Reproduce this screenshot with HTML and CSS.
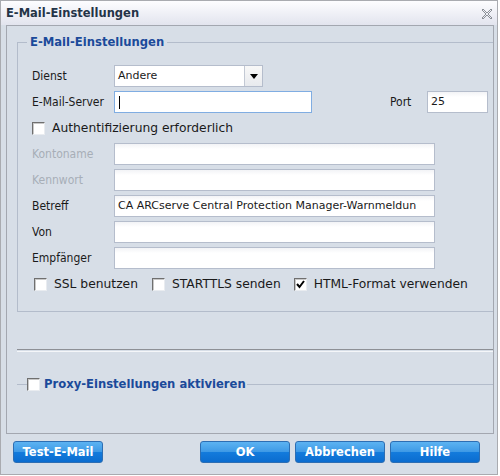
FILE: index.html
```html
<!DOCTYPE html>
<html lang="de">
<head>
    <meta charset="UTF-8">
    <meta name="viewport" content="width=device-width, initial-scale=1.0">
    <title>E-Mail-Einstellungen</title>
    <link rel="stylesheet" href="styles.css">
</head>
<body>
    <div class="dialog">
        <div class="titlebar">
            <span class="title">E-Mail-Einstellungen</span>
            <svg class="close" width="10" height="10" viewBox="0 0 10 10">
                <path d="M1 0 L5 4 L9 0 L10 1 L6 5 L10 9 L9 10 L5 6 L1 10 L0 9 L4 5 L0 1 Z" fill="none" stroke="#8a8f96" stroke-width="1"/>
            </svg>
        </div>

        <div class="panel">
            <fieldset class="group">
                <legend>E-Mail-Einstellungen</legend>
                <div class="form">
                    <div class="row">
                        <label class="lbl">Dienst</label>
                        <div class="select">
                            <span class="select-text">Andere</span>
                            <span class="select-btn"><span class="arrow"></span></span>
                        </div>
                    </div>
                    <div class="row">
                        <label class="lbl">E-Mail-Server</label>
                        <div class="field field-server focused"><span class="caret"></span></div>
                        <label class="lbl-port">Port</label>
                        <div class="field field-port">25</div>
                    </div>
                    <div class="row">
                        <span class="check"></span>
                        <span class="check-text">Authentifizierung erforderlich</span>
                    </div>
                    <div class="row">
                        <label class="lbl disabled">Kontoname</label>
                        <div class="field field-wide"></div>
                    </div>
                    <div class="row">
                        <label class="lbl disabled">Kennwort</label>
                        <div class="field field-wide"></div>
                    </div>
                    <div class="row">
                        <label class="lbl">Betreff</label>
                        <div class="field field-wide">CA ARCserve Central Protection Manager-Warnmeldun</div>
                    </div>
                    <div class="row">
                        <label class="lbl">Von</label>
                        <div class="field field-wide"></div>
                    </div>
                    <div class="row">
                        <label class="lbl">Empfänger</label>
                        <div class="field field-wide"></div>
                    </div>
                    <div class="row options">
                        <span class="check"></span>
                        <span class="check-text opt-ssl">SSL benutzen</span>
                        <span class="check"></span>
                        <span class="check-text opt-tls">STARTTLS senden</span>
                        <span class="check checked">
                            <svg width="9" height="9" viewBox="0 0 9 9"><path d="M1 4 L3.5 7 L8 1" fill="none" stroke="#000" stroke-width="2"/></svg>
                        </span>
                        <span class="check-text">HTML-Format verwenden</span>
                    </div>
                </div>
            </fieldset>

            <div class="separator"></div>

            <fieldset class="group collapsed">
                <legend><span class="check"></span>Proxy-Einstellungen aktivieren</legend>
            </fieldset>
        </div>

        <div class="footer">
            <button class="btn">Test-E-Mail</button>
            <div class="btn-group">
                <button class="btn">OK</button>
                <button class="btn">Abbrechen</button>
                <button class="btn">Hilfe</button>
            </div>
        </div>
    </div>
</body>
</html>
```

FILE: styles.css
```css
body {
    margin: 0;
    background: #ffffff;
    font-family: "DejaVu Sans", Verdana, sans-serif;
    color: #1a1a1a;
}

.dialog {
    width: 498px;
    height: 475px;
    box-sizing: border-box;
    border: 1px solid #a9abb0;
    background: #d7dee7;
    display: flex;
    flex-direction: column;
}

.titlebar {
    height: 24px;
    display: flex;
    align-items: center;
    justify-content: space-between;
    padding: 0 5px 0 5px;
    background: linear-gradient(#fdfdff, #e2e4ee);
}

.title {
    font-weight: bold;
    font-size: 11.5px;
    color: #243447;
}

.close {
    margin-top: 1px;
}

.panel {
    height: 409px;
    box-sizing: border-box;
    margin: 0 3px 0 5px;
    border: 1px solid #a3a7b0;
    padding-left: 10px;
}

.group {
    margin: 9px 0 0 0;
    padding: 0;
    border: 1px solid #b3bccb;
    border-right: none;
    min-width: 0;
}

.group legend {
    margin-left: 9px;
    padding: 0 3px;
    font-weight: bold;
    font-size: 11.6px;
    color: #1b4a9a;
}

.form {
    padding: 16px 0 16px 14px;
    display: flex;
    flex-direction: column;
    gap: 4px;
}

.row {
    height: 22px;
    display: flex;
    align-items: center;
}

.lbl {
    width: 82px;
    font-family: "DejaVu Sans Condensed", "DejaVu Sans", sans-serif;
    font-stretch: condensed;
    font-size: 12px;
}

.lbl.disabled {
    color: #a7aeb7;
}

.lbl-port {
    margin-left: 78px;
    width: 37px;
    font-family: "DejaVu Sans Condensed", "DejaVu Sans", sans-serif;
    font-stretch: condensed;
    font-size: 12px;
}

.field {
    height: 22px;
    box-sizing: border-box;
    border: 1px solid #b5bdcc;
    background: linear-gradient(#f2f3f6, #ffffff 5px);
    font-size: 11px;
    line-height: 20px;
    padding-left: 3px;
    white-space: nowrap;
    overflow: hidden;
    display: flex;
    align-items: center;
}

.field.focused {
    border-color: #80ade2;
    background: #ffffff;
}

.field-server {
    width: 198px;
}

.field-port {
    width: 61px;
}

.field-wide {
    width: 321px;
}

.caret {
    width: 1px;
    height: 13px;
    background: #000000;
    margin-left: 1px;
}

.select {
    width: 149px;
    height: 22px;
    box-sizing: border-box;
    border: 1px solid #b5bdcc;
    background: #ffffff;
    display: flex;
}

.select-text {
    flex: 1;
    font-size: 11px;
    line-height: 20px;
    padding-left: 3px;
}

.select-btn {
    width: 17px;
    border-left: 1px solid #c3c9d4;
    background: linear-gradient(#f8f8f8, #e8eaee);
    display: flex;
    align-items: center;
    justify-content: center;
}

.arrow {
    width: 0;
    height: 0;
    border-left: 4px solid transparent;
    border-right: 4px solid transparent;
    border-top: 5px solid #000000;
}

.check {
    width: 13px;
    height: 13px;
    box-sizing: border-box;
    border: 1px solid;
    border-color: #6f6f6f #e9ecf0 #e9ecf0 #6f6f6f;
    background: #ffffff;
    box-shadow: inset 1px 1px 0 #c8c8c8;
    display: inline-flex;
    align-items: center;
    justify-content: center;
    flex-shrink: 0;
}

.check-text {
    font-size: 12.3px;
    margin-left: 7px;
}

.options {
    padding-left: 2px;
}

.opt-ssl {
    margin-right: 14px;
}

.opt-tls {
    margin-right: 13px;
}

.separator {
    margin-top: 37px;
    height: 1px;
    border-top: 1px solid #8d9096;
    border-bottom: 1px solid #f4f6f9;
}

.group.collapsed {
    margin-top: 25px;
    border-left: none;
    border-bottom: none;
}

.group.collapsed legend {
    margin-left: 10px;
    padding: 0 1px 0 0;
    display: flex;
    align-items: center;
    gap: 4px;
}

.footer {
    flex: 1;
    display: flex;
    justify-content: space-between;
    align-items: flex-start;
    padding: 7px 17px 0 12px;
}

.btn-group {
    display: flex;
    gap: 5px;
}

.btn {
    width: 90px;
    height: 22px;
    padding: 0;
    border: 1px solid #2d6eb3;
    border-radius: 3px;
    background: linear-gradient(#5cb3f2, #3f9ae6 48%, #137bdc 52%, #0b6ccf);
    color: #ffffff;
    font-family: "DejaVu Sans", Verdana, sans-serif;
    font-weight: bold;
    font-size: 11.5px;
    cursor: pointer;
}

.btn:hover {
    background: linear-gradient(#73c0f6, #1985e4);
}
```
